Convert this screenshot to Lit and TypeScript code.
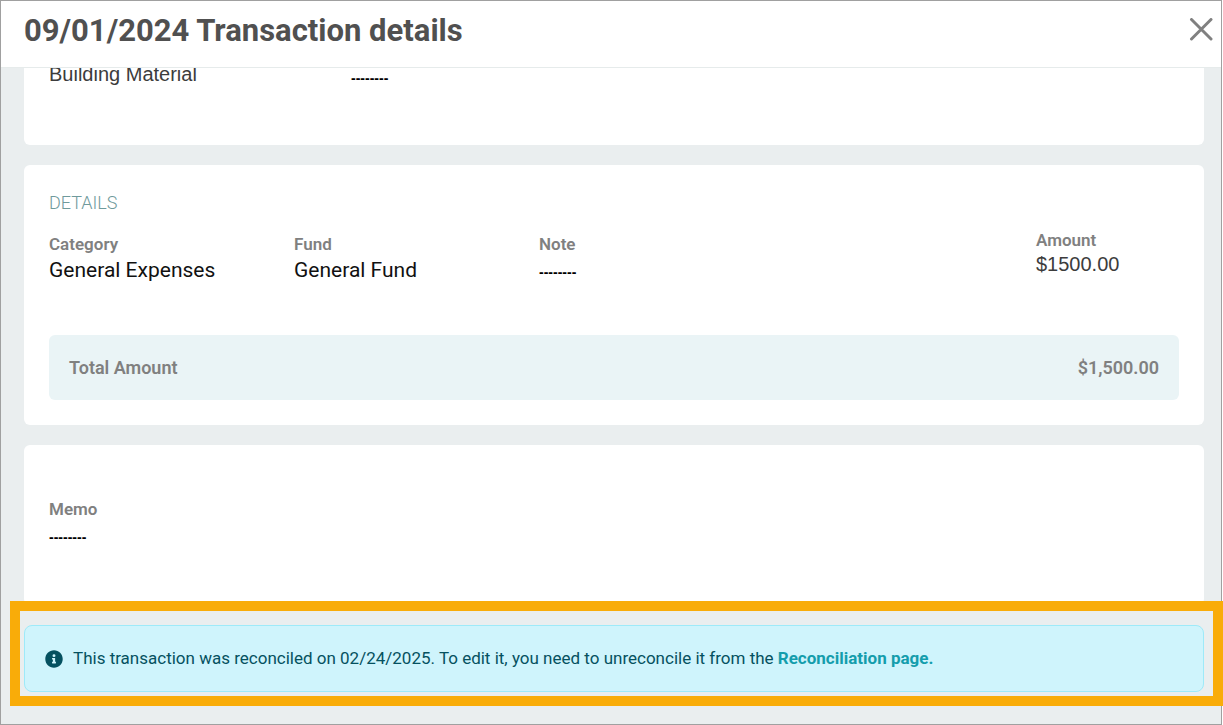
import { LitElement, html, css } from "lit";
import { customElement } from "lit/decorators.js";

@customElement("app-root")
export class AppRoot extends LitElement {
  static styles = css`
    :host {
      display: block;
      font-family: Roboto, "Liberation Sans", sans-serif;
      background: #fff;
    }
    * {
      box-sizing: border-box;
    }
    .dialog {
      position: relative;
      display: flex;
      flex-direction: column;
      height: 100vh;
      margin-right: 1px;
      border: 1px solid #a0a0a0;
      background: #eaeeef;
    }
    .header {
      flex: none;
      display: flex;
      align-items: center;
      justify-content: space-between;
      padding: 8px 8px 16px 23px;
      border-bottom: 1px solid #e6ebeb;
      background: #fff;
    }
    .title {
      margin: 0;
      padding-top: 2px;
      font-size: 31px;
      line-height: 40px;
      font-weight: 700;
      color: #505050;
    }
    .close {
      display: flex;
      padding: 0;
      border: 0;
      background: none;
      cursor: pointer;
    }
    .body {
      flex: 1;
      min-height: 0;
      display: flex;
      flex-direction: column;
      justify-content: flex-end;
      gap: 20px;
      padding: 0 17px 32px 23px;
      overflow: hidden;
    }
    .card {
      flex: none;
      padding: 25px;
      border-radius: 6px;
      background: #fff;
    }
    .payee {
      display: grid;
      grid-template-columns: 302px 1fr;
      padding-bottom: 51px;
    }
    .memo {
      padding: 52px 25px;
    }
    .section {
      margin: 0 0 12px;
      font-size: 18px;
      line-height: 26px;
      font-weight: 300;
      color: #6f9a9c;
    }
    .fields {
      display: grid;
      grid-template-columns: 245px 245px 1fr 143px;
      margin: 0 0 47px;
    }
    .field {
      padding-top: 4px;
    }
    .label {
      font-size: 17px;
      line-height: 24px;
      font-weight: 600;
      color: #808080;
    }
    .value {
      margin: 0;
      font-size: 21px;
      line-height: 28px;
      color: #111;
    }
    .plain {
      margin: 0;
      font-family: "Liberation Sans", Arial, sans-serif;
      font-size: 20px;
      line-height: 24px;
      color: #3c3c3c;
    }
    .empty {
      margin: 0;
      font-family: "Liberation Sans", Arial, sans-serif;
      font-size: 14px;
      line-height: 32px;
      font-weight: 700;
      color: #000;
    }
    .total {
      display: flex;
      justify-content: space-between;
      padding: 20px;
      border-radius: 6px;
      background: #eaf4f6;
      font-size: 18px;
      line-height: 25px;
      font-weight: 600;
      color: #808080;
    }
    .alert {
      flex: none;
      display: flex;
      align-items: center;
      gap: 10px;
      padding: 20px;
      border: 1px solid #9eeaf9;
      border-radius: 8px;
      background: #cff4fc;
      font-size: 17px;
      line-height: 25px;
      color: #055160;
    }
    .message {
      margin: 0;
    }
    .link {
      font-weight: 700;
      color: #149dac;
      text-decoration: none;
    }
    .highlight {
      position: absolute;
      left: 9px;
      right: -2px;
      bottom: 18px;
      height: 105px;
      border: 10px solid #f9ac09;
      pointer-events: none;
    }
  `;

  render() {
    return html`
      <main class="dialog" role="dialog" aria-labelledby="title">
        <header class="header">
          <h1 class="title" id="title">09/01/2024 Transaction details</h1>
          <button class="close" type="button" aria-label="Close">
            <svg width="24" height="24" viewBox="0 0 24 24" fill="none" stroke="#808080" stroke-width="3" stroke-linecap="round">
              <path d="M2.5 1.5 22 21M22 1.5 2.5 21" />
            </svg>
          </button>
        </header>
        <div class="body">
          <section class="card payee">
            <div class="plain">Building Material</div>
            <div class="empty">--------</div>
          </section>
          <section class="card">
            <h2 class="section">DETAILS</h2>
            <dl class="fields">
              <div class="field">
                <dt class="label">Category</dt>
                <dd class="value">General Expenses</dd>
              </div>
              <div class="field">
                <dt class="label">Fund</dt>
                <dd class="value">General Fund</dd>
              </div>
              <div class="field">
                <dt class="label">Note</dt>
                <dd class="empty">--------</dd>
              </div>
              <div>
                <dt class="label">Amount</dt>
                <dd class="plain">$1500.00</dd>
              </div>
            </dl>
            <div class="total"><span>Total Amount</span><span>$1,500.00</span></div>
          </section>
          <section class="card memo">
            <div class="label">Memo</div>
            <div class="empty">--------</div>
          </section>
          <div class="alert" role="status">
            <svg width="18" height="18" viewBox="0 0 512 512" fill="#055160" aria-hidden="true">
              <path d="M256 8C119 8 8 119 8 256s111 248 248 248 248-111 248-248S393 8 256 8zm0 110a42 42 0 1 1 0 84 42 42 0 0 1 0-84zm56 254c0 7-5 12-12 12h-88c-7 0-12-5-12-12v-24c0-7 5-12 12-12h12v-64h-12c-7 0-12-5-12-12v-24c0-7 5-12 12-12h64c7 0 12 5 12 12v100h12c7 0 12 5 12 12v24z" />
            </svg>
            <p class="message">This transaction was reconciled on 02/24/2025. To edit it, you need to unreconcile it from the <a class="link" href="#reconciliation">Reconciliation page.</a></p>
          </div>
        </div>
        <div class="highlight"></div>
      </main>
    `;
  }
}
